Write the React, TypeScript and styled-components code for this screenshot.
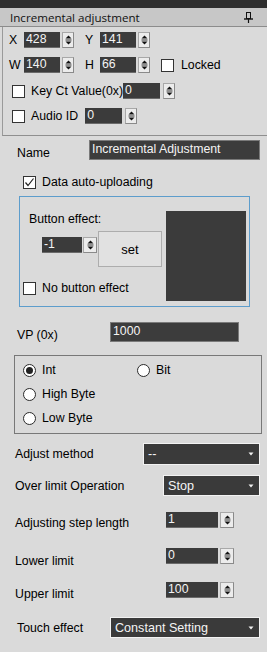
import React from "react";
import styled, { createGlobalStyle } from "styled-components";

const Global = createGlobalStyle`
  html, body { margin: 0; padding: 0; background: #dadada; }
  body { width: 267px; height: 652px; overflow: hidden; }
  * { box-sizing: border-box; }
`;

const Page = styled.div`
  width: 267px;
  height: 652px;
  background: #dadada;
  font-family: "Liberation Sans", Arial, sans-serif;
  font-size: 12.3px;
  color: #000;
  display: flex;
  flex-direction: column;
`;

const TopStrip = styled.div`
  height: 8px;
  background: #2e2e2e;
`;

const TitleBar = styled.div`
  height: 19px;
  background: #c7c7c7;
  border-bottom: 1px solid #8c8c8c;
  display: flex;
  align-items: center;
  justify-content: space-between;
  padding: 0 14px 0 10px;
`;

const Title = styled.span`
  font-family: "Open Sans", "Liberation Sans", sans-serif;
  font-size: 11.6px;
  color: #111;
`;

const PropsBox = styled.div`
  margin-left: 2px;
  border-left: 1px solid #9a9a9a;
  border-bottom: 1px solid #8f8f8f;
  padding: 5px 0 11px 6px;
  display: flex;
  flex-direction: column;
`;

const Row = styled.div<{ $mt?: number; $ml?: number; $align?: string }>`
  display: flex;
  align-items: ${(p) => p.$align ?? "center"};
  margin-top: ${(p) => p.$mt ?? 0}px;
  margin-left: ${(p) => p.$ml ?? 0}px;
`;

const CoordLabel = styled.span`
  width: 15px;
  line-height: 16px;
`;

const Coord = styled.div<{ $ml?: number }>`
  display: flex;
  align-items: center;
  margin-left: ${(p) => p.$ml ?? 0}px;
`;

const DarkInput = styled.div<{ $w: number; $h?: number; $ml?: number; $mt?: number }>`
  width: ${(p) => p.$w}px;
  height: ${(p) => p.$h ?? 16}px;
  margin-left: ${(p) => p.$ml ?? 0}px;
  margin-top: ${(p) => p.$mt ?? 0}px;
  background: #3b3b3b;
  color: #f4f4f4;
  padding-left: 2px;
  line-height: ${(p) => (p.$h ?? 16) - 1}px;
  border-bottom: 1px solid #6a6a6a;
  white-space: nowrap;
  overflow: hidden;
  flex: none;
`;

const WideInput = styled.div<{ $w: number }>`
  width: ${(p) => p.$w}px;
  height: 20px;
  background: #3c3c3c;
  border: 1px solid #7a7a7a;
  color: #f4f4f4;
  padding-left: 2px;
  line-height: 16px;
  white-space: nowrap;
`;

const SpinBox = styled.div<{ $w?: number; $gap?: number; $mt?: number }>`
  width: ${(p) => p.$w ?? 12}px;
  height: 16px;
  margin-left: ${(p) => p.$gap ?? 2}px;
  margin-top: ${(p) => p.$mt ?? 0}px;
  background: #ececec;
  border: 1px solid #a8a8a8;
  border-right-color: #8a8a8a;
  border-bottom-color: #8a8a8a;
  display: flex;
  align-items: center;
  justify-content: center;
  flex: none;
`;

const Spinner = ({ w, gap, mt }: { w?: number; gap?: number; mt?: number }) => (
  <SpinBox $w={w} $gap={gap} $mt={mt}>
    <svg width="7" height="12" viewBox="0 0 7 12">
      <polygon points="3.5,1.5 6.5,4.5 0.5,4.5" fill="#111" />
      <line x1="0.5" y1="6" x2="6.5" y2="6" stroke="#333" strokeWidth="1" />
      <polygon points="0.5,7.5 6.5,7.5 3.5,10.5" fill="#111" />
    </svg>
  </SpinBox>
);

const Box = styled.span<{ $ml?: number }>`
  width: 13px;
  height: 13px;
  margin-left: ${(p) => p.$ml ?? 0}px;
  background: #fff;
  border: 1px solid #333;
  display: inline-flex;
  align-items: center;
  justify-content: center;
  flex: none;
`;

const CheckText = styled.span<{ $ml?: number }>`
  margin-left: ${(p) => p.$ml ?? 6}px;
  line-height: 16px;
  white-space: nowrap;
`;

const Check = ({ checked, ml }: { checked?: boolean; ml?: number }) => (
  <Box $ml={ml}>
    {checked && (
      <svg width="11" height="11" viewBox="0 0 11 11">
        <polyline points="1.5,5.5 4,8.5 9.5,1.5" fill="none" stroke="#222" strokeWidth="1.2" />
      </svg>
    )}
  </Box>
);

const Main = styled.div`
  display: flex;
  flex-direction: column;
`;

const FieldRow = styled.div<{ $mt: number; $pl: number; $h: number; $align?: string }>`
  display: flex;
  align-items: ${(p) => p.$align ?? "center"};
  height: ${(p) => p.$h}px;
  margin-top: ${(p) => p.$mt}px;
  padding-left: ${(p) => p.$pl}px;
`;

const FieldLabel = styled.span<{ $w: number; $mt?: number }>`
  width: ${(p) => p.$w}px;
  flex: none;
  line-height: 14px;
  margin-top: ${(p) => p.$mt ?? 0}px;
  white-space: nowrap;
`;

const EffectGroup = styled.div`
  margin: 6px 0 0 19px;
  width: 231px;
  height: 111px;
  border: 1px solid #5d9dcc;
  display: flex;
`;

const EffectLeft = styled.div`
  display: flex;
  flex-direction: column;
  padding-top: 15px;
`;

const EffectTitle = styled.span`
  margin-left: 9px;
  line-height: 14px;
`;

const SetButton = styled.div`
  width: 64px;
  height: 36px;
  margin-left: 1px;
  background: #e1e1e1;
  border: 1px solid #adadad;
  display: flex;
  align-items: center;
  justify-content: center;
  font-size: 13px;
`;

const Preview = styled.div`
  width: 80px;
  height: 90px;
  margin: 14px 3px 0 auto;
  background: #3b3b3b;
`;

const RadioGroup = styled.div`
  margin: 13px 0 0 14px;
  width: 248px;
  height: 79px;
  border: 1px solid #787878;
  padding: 2px 0 0 8px;
  display: grid;
  grid-template-columns: 114px 1fr;
  grid-auto-rows: 24px;
  align-items: center;
`;

const RadioItem = styled.div`
  display: flex;
  align-items: center;
`;

const RadioCircle = styled.span<{ $on?: boolean }>`
  width: 13px;
  height: 13px;
  border-radius: 50%;
  border: 1px solid #2a2a2a;
  background: #fff;
  display: inline-flex;
  align-items: center;
  justify-content: center;
  &::after {
    content: "";
    width: 7px;
    height: 7px;
    border-radius: 50%;
    background: ${(p) => (p.$on ? "#222" : "transparent")};
  }
`;

const Radio = ({ label, on }: { label: string; on?: boolean }) => (
  <RadioItem>
    <RadioCircle $on={on} />
    <CheckText $ml={6}>{label}</CheckText>
  </RadioItem>
);

const SelectBox = styled.div<{ $w: number; $h: number }>`
  width: ${(p) => p.$w}px;
  height: ${(p) => p.$h}px;
  background: #3a3a3a;
  border: 1px solid #f2f2f2;
  color: #f4f4f4;
  display: flex;
  align-items: center;
  justify-content: space-between;
  padding: 0 5px 0 4px;
  font-size: 12.6px;
`;

const Select = ({ w, h, value }: { w: number; h: number; value: string }) => (
  <SelectBox $w={w} $h={h}>
    <span>{value}</span>
    <svg width="6" height="4" viewBox="0 0 6 4">
      <polygon points="0.5,0.5 5.5,0.5 3,3.5" fill="#f0f0f0" />
    </svg>
  </SelectBox>
);

const Pin = () => (
  <svg width="9" height="11" viewBox="0 0 9 11">
    <rect x="2.5" y="0.5" width="4" height="6" fill="none" stroke="#111" />
    <line x1="0" y1="7" x2="9" y2="7" stroke="#111" strokeWidth="1.4" />
    <line x1="4.5" y1="7" x2="4.5" y2="11" stroke="#111" strokeWidth="1.2" />
  </svg>
);

export default function App() {
  return (
    <Page>
      <Global />
      <TopStrip />
      <TitleBar>
        <Title>Incremental adjustment</Title>
        <Pin />
      </TitleBar>
      <PropsBox>
        <Row>
          <Coord>
            <CoordLabel>X</CoordLabel>
            <DarkInput $w={36}>428</DarkInput>
            <Spinner />
          </Coord>
          <Coord $ml={11}>
            <CoordLabel>Y</CoordLabel>
            <DarkInput $w={36}>141</DarkInput>
            <Spinner />
          </Coord>
        </Row>
        <Row $mt={9}>
          <Coord>
            <CoordLabel>W</CoordLabel>
            <DarkInput $w={36}>140</DarkInput>
            <Spinner />
          </Coord>
          <Coord $ml={11}>
            <CoordLabel>H</CoordLabel>
            <DarkInput $w={36}>66</DarkInput>
            <Spinner />
          </Coord>
          <Check ml={11} />
          <CheckText $ml={7}>Locked</CheckText>
        </Row>
        <Row $mt={10} $ml={3}>
          <Check />
          <CheckText>Key Ct Value(0x)</CheckText>
          <DarkInput $w={37} $ml={0}>0</DarkInput>
          <Spinner gap={3} />
        </Row>
        <Row $mt={9} $ml={3}>
          <Check />
          <CheckText>Audio ID</CheckText>
          <DarkInput $w={37} $ml={7}>0</DarkInput>
          <Spinner gap={3} />
        </Row>
      </PropsBox>
      <Main>
        <FieldRow $mt={4} $pl={17} $h={20} $align="flex-end">
          <FieldLabel $w={72}>Name</FieldLabel>
          <WideInput $w={171}>Incremental Adjustment</WideInput>
        </FieldRow>
        <FieldRow $mt={14} $pl={23} $h={16}>
          <Check checked />
          <CheckText>Data auto-uploading</CheckText>
        </FieldRow>
        <EffectGroup>
          <EffectLeft>
            <EffectTitle>Button effect:</EffectTitle>
            <Row $mt={5} $ml={22} $align="flex-start">
              <DarkInput $w={40} $mt={6}>-1</DarkInput>
              <Spinner w={14} gap={1} mt={6} />
              <SetButton>set</SetButton>
            </Row>
            <Row $mt={13} $ml={3}>
              <Check />
              <CheckText>No button effect</CheckText>
            </Row>
          </EffectLeft>
          <Preview />
        </EffectGroup>
        <FieldRow $mt={15} $pl={17} $h={20} $align="flex-end">
          <FieldLabel $w={93}>VP (0x)</FieldLabel>
          <WideInput $w={129}>1000</WideInput>
        </FieldRow>
        <RadioGroup>
          <Radio label="Int" on />
          <Radio label="Bit" />
          <Radio label="High Byte" />
          <span />
          <Radio label="Low Byte" />
        </RadioGroup>
        <FieldRow $mt={9} $pl={15} $h={22}>
          <FieldLabel $w={128}>Adjust method</FieldLabel>
          <Select w={117} h={22} value="--" />
        </FieldRow>
        <FieldRow $mt={10} $pl={15} $h={21}>
          <FieldLabel $w={148}>Over limit Operation</FieldLabel>
          <Select w={97} h={21} value="Stop" />
        </FieldRow>
        <FieldRow $mt={16} $pl={15} $h={16} $align="flex-start">
          <FieldLabel $w={151} $mt={4}>Adjusting step length</FieldLabel>
          <DarkInput $w={52}>1</DarkInput>
          <Spinner w={14} gap={2} />
        </FieldRow>
        <FieldRow $mt={20} $pl={15} $h={16} $align="flex-start">
          <FieldLabel $w={151} $mt={6}>Lower limit</FieldLabel>
          <DarkInput $w={52}>0</DarkInput>
          <Spinner w={14} gap={2} />
        </FieldRow>
        <FieldRow $mt={18} $pl={15} $h={16} $align="flex-start">
          <FieldLabel $w={151} $mt={5}>Upper limit</FieldLabel>
          <DarkInput $w={52}>100</DarkInput>
          <Spinner w={14} gap={2} />
        </FieldRow>
        <FieldRow $mt={19} $pl={17} $h={21}>
          <FieldLabel $w={93}>Touch effect</FieldLabel>
          <Select w={150} h={21} value="Constant Setting" />
        </FieldRow>
      </Main>
    </Page>
  );
}
